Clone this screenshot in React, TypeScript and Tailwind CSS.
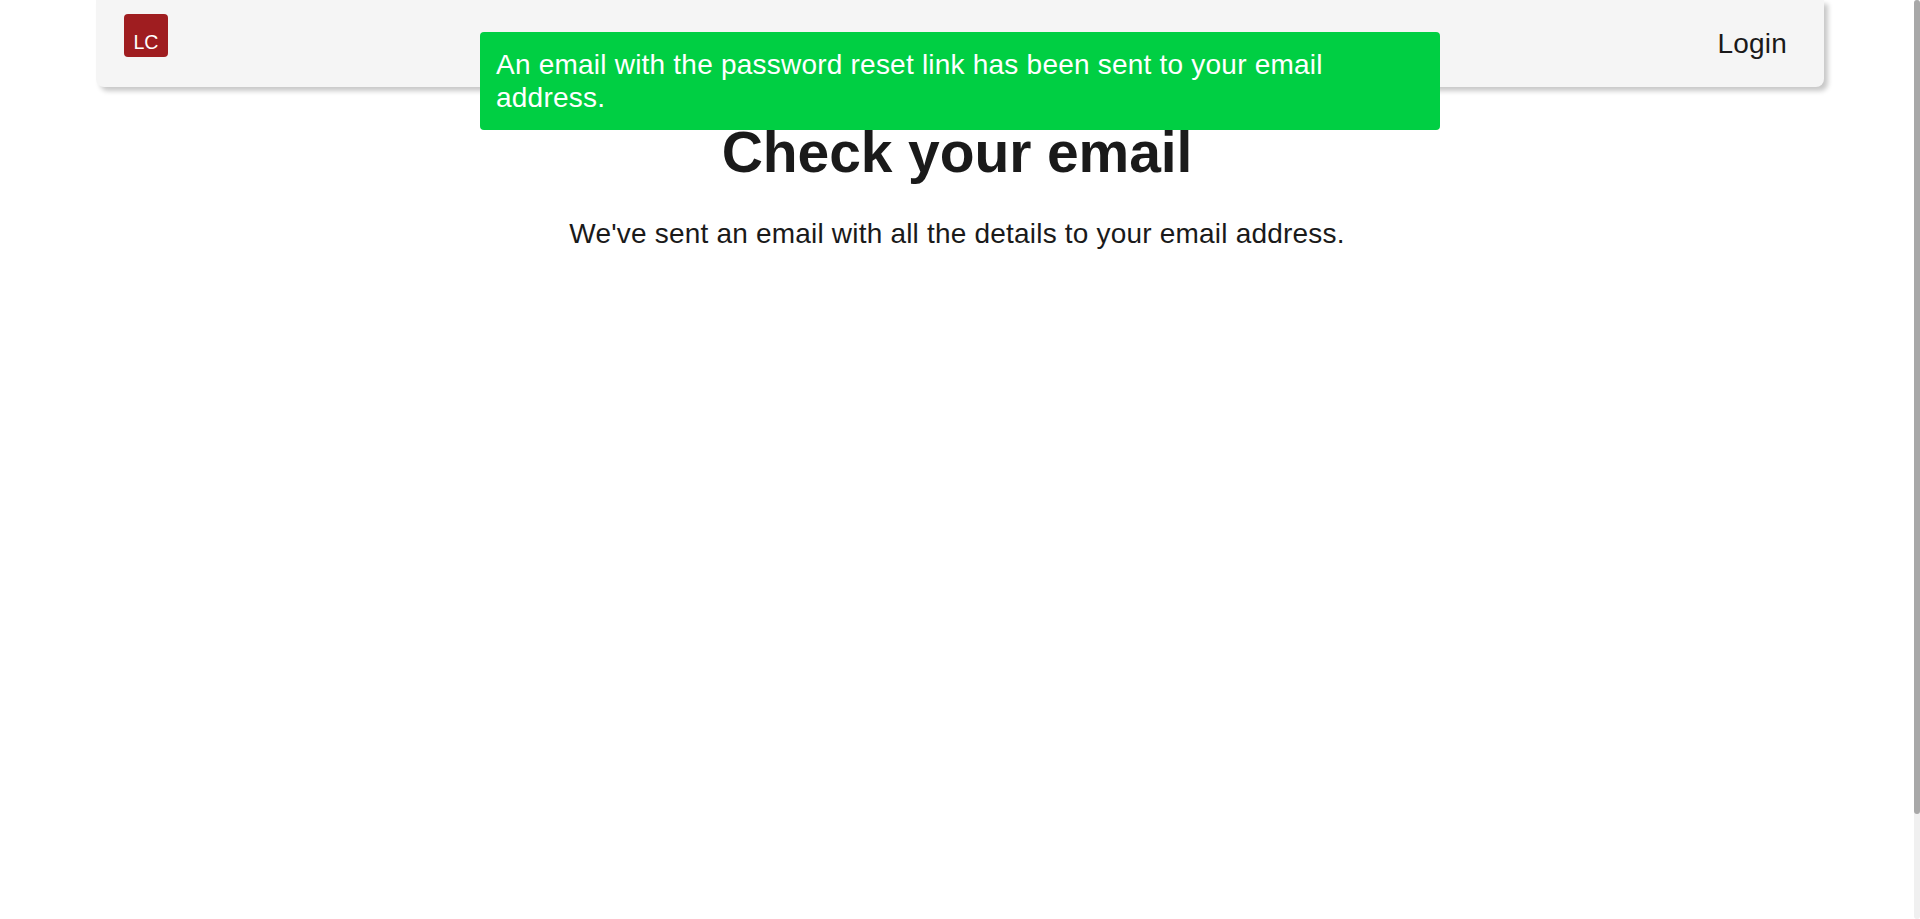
import type { ReactNode } from "react";

function Logo() {
  return (
    <a
      href="#"
      className="mt-3.5 ml-7 flex h-[43px] w-11 items-end justify-center rounded bg-[#9f1d20] pb-1 text-[19.6px] leading-[22px] text-white"
    >
      LC
    </a>
  );
}

function Navbar() {
  return (
    <nav className="absolute inset-x-0 top-0 mx-auto flex h-[87px] w-[1728px] items-start justify-between rounded-b-lg bg-[#f5f5f5] shadow-[4px_4px_5px_rgba(0,0,0,0.22)]">
      <Logo />
      <a
        href="#"
        className="mt-[27px] mr-[37px] text-[28px] leading-[33px] tracking-[0.2px]"
      >
        Login
      </a>
    </nav>
  );
}

function Toast({ children }: { children: ReactNode }) {
  return (
    <div
      role="status"
      className="absolute inset-x-0 top-8 mx-auto w-[960px] rounded bg-[#00cf43] p-4 text-[28px] leading-[33px] tracking-[0.22px] text-white"
    >
      {children}
    </div>
  );
}

export default function App() {
  return (
    <div className="relative flex h-screen overflow-hidden bg-white font-['Liberation_Sans',Arial,sans-serif] text-[#1a1a1a]">
      <main className="flex flex-1 flex-col items-center pt-[119px]">
        <h1 className="text-[57px] leading-[66px] font-bold tracking-[-0.1px]">
          Check your email
        </h1>
        <p className="mt-8 text-[28px] leading-[33px] tracking-[0.2px]">
          We've sent an email with all the details to your email address.
        </p>
      </main>

      {/* Scroll track */}
      <div className="w-1.5 rounded-full bg-[#f0f0f0]">
        <div className="h-[814px] rounded-full bg-[#a8a8a8]" />
      </div>

      <Navbar />
      <Toast>
        An email with the password reset link has been sent to your email
        address.
      </Toast>
    </div>
  );
}
